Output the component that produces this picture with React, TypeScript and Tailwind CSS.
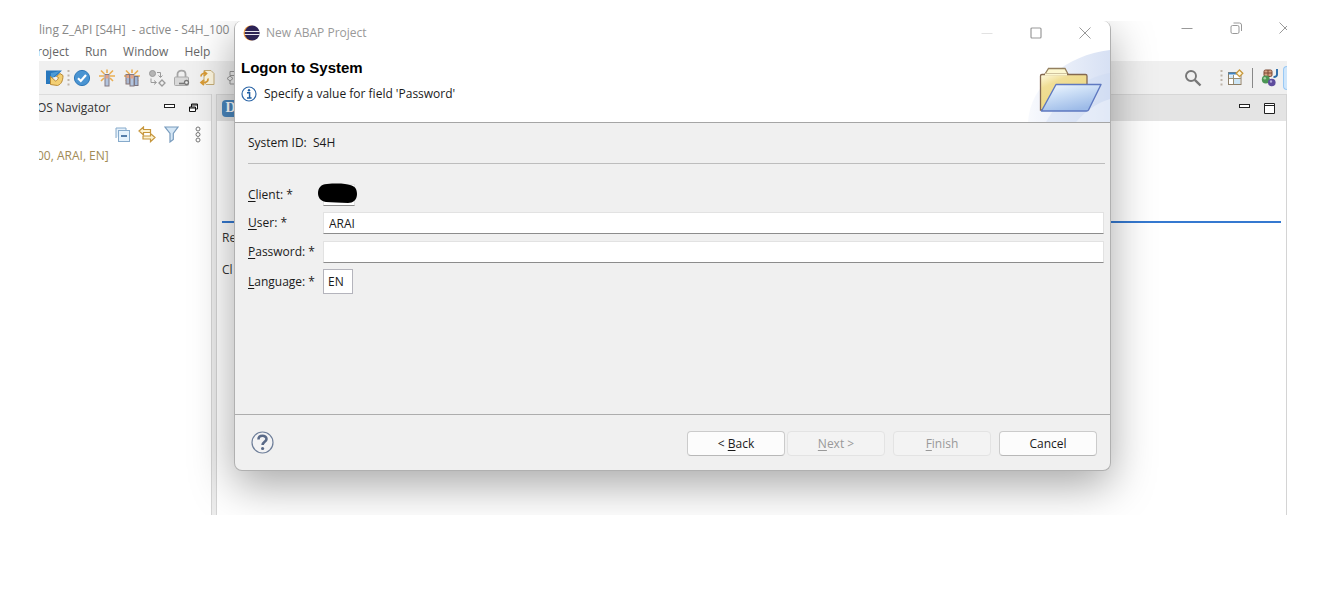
import React, { useState } from "react";
import clsx from "clsx";

type IconProps = { className?: string };

function EclipseLogo() {
  return (
    <svg width="17" height="16" viewBox="0 0 17 16" aria-hidden="true">
      <circle cx="8" cy="8" r="7.5" fill="#f19b3c" />
      <circle cx="9.2" cy="8" r="7.5" fill="#2c2255" />
      <path d="M1.8 6.500h14.900M1.8 9.500h14.900" stroke="#e9e8f1" strokeWidth="1.2" />
    </svg>
  );
}

function InfoIcon() {
  return (
    <svg width="16" height="16" viewBox="0 0 16 16" aria-hidden="true">
      <circle cx="8" cy="8" r="7" fill="#fff" stroke="#2f68a8" strokeWidth="1.2" />
      <circle cx="8" cy="4.3" r="1.2" fill="#2160a4" />
      <path d="M6 6.8h2.6v4.9M6 12h4.6" fill="none" stroke="#2160a4" strokeWidth="1.5" />
    </svg>
  );
}

function FolderBanner() {
  return (
    <svg width="84" height="73" viewBox="0 0 84 73" aria-hidden="true">
      <defs>
        <linearGradient id="glow" x1="0" y1="0" x2="1" y2="0">
          <stop offset="0" stopColor="#f6f8fd" />
          <stop offset="1" stopColor="#cdd9f1" />
        </linearGradient>
        <linearGradient id="folderBack" x1="0" y1="0" x2="0.6" y2="1">
          <stop offset="0" stopColor="#fffbe0" />
          <stop offset="0.3" stopColor="#f0de96" />
          <stop offset="1" stopColor="#ecd67b" />
        </linearGradient>
        <linearGradient id="folderFront" x1="0" y1="0" x2="0.5" y2="1">
          <stop offset="0" stopColor="#f5faff" />
          <stop offset="0.4" stopColor="#cfe1f7" />
          <stop offset="1" stopColor="#9dbbe8" />
        </linearGradient>
      </defs>
      <path d="M2 73C4 36 40 6 84 1V73Z" fill="url(#glow)" opacity="0.8" />
      <path d="M20 73C34 48 56 29 84 24V73Z" fill="#c9d6f0" opacity="0.35" />
      <path d="M50 73C60 62 70 54 84 50V73Z" fill="#fff" opacity="0.35" />
      <g transform="translate(1 0)">
        <path d="M18 25L21.500 19.500H38L41 25Z" fill="#fdf8d0" stroke="#937f5e" strokeWidth="1.3" />
        <path d="M13.500 27Q13.500 25.500 15 25.500H58.500Q60 25.500 60 27V61H13.500Z" fill="url(#folderBack)" stroke="#846850" strokeWidth="1.3" />
        <path d="M18 25.500H40" stroke="#fdf8d0" strokeWidth="2" />
        <path d="M29 35.500H74L61.500 61Q61 62 59.500 62H14.500Z" fill="url(#folderFront)" stroke="#5e78c0" strokeWidth="1.4" strokeLinejoin="round" />
      </g>
    </svg>
  );
}

function SaveAllIcon() {
  return (
    <svg width="19" height="18" viewBox="0 0 19 18" aria-hidden="true">
      <path d="M1 1.500H17L13 5.500 10 8 7 8.500 6 15H1Z" fill="#2877bd" />
      <path d="M1.500 14L6 9V4L15 2Z" fill="#4c9ad5" />
      <path d="M5.500 7.500V15.500L12.500 16.500C16 15.500 18 12 18 6.500L15 4.500 11.500 7.500 13.500 8.500C13 10.500 12 11.500 10.500 12Z" fill="#f4cf72" stroke="#b98a35" />
    </svg>
  );
}

function CheckIcon() {
  return (
    <svg width="18" height="18" viewBox="0 0 18 18" aria-hidden="true">
      <circle cx="9" cy="9" r="7.600" fill="#4a94d2" stroke="#2f78b8" />
      <path d="M5 9.300L7.800 12L13 6" fill="none" stroke="#fff" strokeWidth="2.200" />
    </svg>
  );
}

function WandIcon({ many }: { many?: boolean }) {
  return (
    <svg width="18" height="18" viewBox="0 0 18 18" aria-hidden="true">
      <path d="M9 0.500V4M3 1.500L6.500 5M15 1.500L11.500 5M1 7H6M17 7H12M3 12L6 9M15 12L12 9" stroke="#e9ae53" strokeWidth="1.600" />
      {many && (
        <>
          <rect x="3" y="5.500" width="3.500" height="9.500" fill="#a9b8d2" stroke="#8a7775" />
          <rect x="3.500" y="6" width="2.500" height="3" fill="#e5a283" />
          <rect x="11.500" y="7.500" width="3.500" height="9" fill="#9fb6d8" stroke="#7b7480" />
        </>
      )}
      <rect x="7" y="5.500" width="4" height="11.500" fill="#b3c5df" stroke="#837a82" />
      <rect x="7.500" y="6" width="3" height="3.500" fill="#e5a283" />
    </svg>
  );
}

function CycleIcon() {
  return (
    <svg width="18" height="18" viewBox="0 0 18 18" fill="none" stroke="#9a9a9a" aria-hidden="true">
      <circle cx="4.500" cy="4.500" r="3" fill="#b5b5b5" />
      <path d="M14 11L17 14 14 17 11 14Z" strokeWidth="1.300" />
      <path d="M9 3.500H12.500V8M10.500 6.500L12.500 8.500 14.500 6.500M3 9.500V13.500H8M6 11.500L8.500 13.500 6 15.500" />
    </svg>
  );
}

function LockIcon() {
  return (
    <svg width="18" height="18" viewBox="0 0 18 18" fill="none" aria-hidden="true">
      <path d="M4.500 8V5C4.500 0.500 12.500 0.500 12.500 5V8" stroke="#a5a5a5" strokeWidth="1.800" />
      <rect x="1.500" y="8" width="14" height="8.500" rx="1" fill="#d8d8d8" stroke="#a9a9a9" />
      <path d="M6 14.500H11" stroke="#777" strokeWidth="1.600" />
      <circle cx="13.500" cy="13.500" r="2" fill="#eee" stroke="#777" strokeWidth="1.300" />
    </svg>
  );
}

function ScriptIcon() {
  return (
    <svg width="18" height="18" viewBox="0 0 18 18" fill="none" aria-hidden="true">
      <path d="M6 1.500H13L16 4.500V15.500H8L6 13Z" fill="#fdf6df" stroke="#c5ad78" />
      <path d="M3 7.500C3 5 5 4 8 4.500M6 2.500L8.500 4.500 6 7M10 9.500C10.500 12.500 8 14 4 13.500M6 11L3 13.500 6 16" stroke="#d99b35" strokeWidth="1.700" />
    </svg>
  );
}

function BranchIcon() {
  return (
    <svg width="18" height="18" viewBox="0 0 18 18" fill="none" stroke="#999" aria-hidden="true">
      <path d="M7 2.500H14V6.500H7ZM4 9.500L7 7 10 9.500 7 12ZM7 12V15H14" />
    </svg>
  );
}

function SearchIcon() {
  return (
    <svg width="18" height="18" viewBox="0 0 18 18" fill="none" stroke="#777" aria-hidden="true">
      <circle cx="7" cy="7" r="5" strokeWidth="1.900" />
      <path d="M10.800 10.800L16.500 16.500" strokeWidth="2.400" />
    </svg>
  );
}

function PerspectiveIcon() {
  return (
    <svg width="17" height="17" viewBox="0 0 17 17" fill="none" aria-hidden="true">
      <rect x="1.500" y="3.500" width="12.500" height="12" fill="#fff" stroke="#8d7e66" />
      <path d="M1.500 4.500H11" stroke="#3f85c5" strokeWidth="2" />
      <path d="M2.500 6.500H6V9H2.500ZM7 10H13V15H7Z" fill="#cde6f6" />
      <path d="M2 9.500H14M6.500 6V15" stroke="#9b8f74" />
      <path d="M12.500 1L15.800 4.300 12.500 7.600 9.200 4.300Z" fill="#fff7da" stroke="#c89a3e" strokeWidth="1.300" />
    </svg>
  );
}

function AbapIcon() {
  return (
    <svg width="18" height="19" viewBox="0 0 18 19" fill="none" aria-hidden="true">
      <rect x="3" y="2" width="8" height="6.500" rx="1.500" fill="#d5a183" stroke="#7d4a35" />
      <path d="M7 2V8M3 5H11" stroke="#7d4a35" />
      <path d="M16 1V6.500C16 8.500 14.500 9 12.500 9" stroke="#2a6ba8" strokeWidth="1.900" />
      <circle cx="4.800" cy="11.500" r="4" fill="#4c9655" />
      <circle cx="3.800" cy="10.300" r="1.300" fill="#a5d3a6" />
      <circle cx="10.800" cy="14.500" r="3.800" fill="#5e4c9d" />
      <circle cx="10" cy="13.500" r="1.200" fill="#b3a9da" />
    </svg>
  );
}

function CollapseIcon() {
  return (
    <svg width="15" height="15" viewBox="0 0 15 15" fill="none" aria-hidden="true">
      <path d="M1 11V1H11V3" fill="#e5f1fb" stroke="#86aacb" />
      <rect x="3.500" y="3.500" width="11" height="11" fill="#e5f2fc" stroke="#86aacb" />
      <path d="M6 9H12" stroke="#24578f" strokeWidth="1.500" />
    </svg>
  );
}

function LinkIcon() {
  return (
    <svg width="18" height="17" viewBox="0 0 18 17" fill="#fdf2cf" stroke="#c6963c" strokeWidth="1.200" aria-hidden="true">
      <path d="M1 5L5.500 1V3.500H12.500V6.500H5.500V9Z" />
      <path d="M17 11.500L12.500 7.500V10H5V13H12.500V15.700Z" />
    </svg>
  );
}

function FilterIcon() {
  return (
    <svg width="15" height="17" viewBox="0 0 15 17" aria-hidden="true">
      <path d="M1 1H14L9.300 7.500V13.500L6 16V7.500Z" fill="#d4e6f5" stroke="#789bbd" strokeWidth="1.200" />
    </svg>
  );
}

function MenuDots() {
  return (
    <svg width="6" height="17" viewBox="0 0 6 17" fill="none" stroke="#777" aria-hidden="true">
      <circle cx="3" cy="3" r="2" />
      <circle cx="3" cy="8.500" r="2" />
      <circle cx="3" cy="14" r="2" />
    </svg>
  );
}

function HelpIcon() {
  return (
    <svg width="23" height="23" viewBox="0 0 23 23" fill="none" aria-hidden="true">
      <circle cx="11.500" cy="11.500" r="10.500" fill="#f3f3f4" stroke="#6f7f9a" strokeWidth="1.200" />
      <path d="M7.500 8.500C7.500 3.500 15.500 3.800 15.500 8C15.500 10.800 11.600 10.800 11.600 14" stroke="#5a6a88" strokeWidth="2.600" />
      <circle cx="11.600" cy="17.500" r="1.600" fill="#5a6a88" />
    </svg>
  );
}

function MinimizeView() {
  return (
    <svg width="11" height="10" viewBox="0 0 11 10" aria-hidden="true">
      <rect x="0.500" y="1.500" width="10" height="3" fill="#fff" stroke="#222" />
    </svg>
  );
}

function RestoreView() {
  return (
    <svg width="9" height="10" viewBox="0 0 9 10" fill="#fff" stroke="#111" aria-hidden="true">
      <path d="M2.500 1H8.500V6H2.500ZM2.500 2H8.500" />
      <path d="M0.500 4H6.500V8.500H0.500ZM0.500 5H6.500" />
    </svg>
  );
}

function MaximizeView() {
  return (
    <svg width="11" height="11" viewBox="0 0 11 11" fill="#fff" stroke="#222" aria-hidden="true">
      <path d="M0.500 0.500H10.500V10.500H0.500ZM0.500 2.500H10.500" />
    </svg>
  );
}

function WindowGlyph({ kind, className }: IconProps & { kind: "min" | "max" | "restore" | "close" }) {
  return (
    <svg width="12" height="12" viewBox="0 0 12 12" fill="none" stroke="currentColor" className={className} aria-hidden="true">
      {kind === "min" && <path d="M0.500 6.500H11.500" />}
      {kind === "max" && <rect x="1" y="1" width="10" height="10" rx="1" strokeWidth="1.200" />}
      {kind === "restore" && (
        <>
          <rect x="1" y="3.500" width="8" height="8" rx="1.500" />
          <path d="M3.500 1H9.500Q11.500 1 11.500 3V9" />
        </>
      )}
      {kind === "close" && <path d="M0.500 0.500L11.500 11.500M11.500 0.500L0.500 11.500" />}
    </svg>
  );
}

function Grip() {
  return (
    <svg width="3" height="16" viewBox="0 0 3 16" aria-hidden="true">
      <path d="M1.500 0V16" stroke="#bdb3a8" strokeWidth="2" strokeDasharray="2 2.500" />
    </svg>
  );
}

const TOOLS = [
  { label: "Validate", icon: <CheckIcon /> },
  { label: "Activate", icon: <WandIcon /> },
  { label: "Activate all", icon: <WandIcon many /> },
  { label: "Toggle version", icon: <CycleIcon /> },
  { label: "Lock", icon: <LockIcon /> },
  { label: "Refresh", icon: <ScriptIcon /> },
  { label: "Where used", icon: <BranchIcon /> },
];

function Workbench() {
  return (
    <div className="flex min-h-[494px] flex-col text-[#333]">
      <div className="flex h-[18px] items-center justify-between text-[#888]">
        <span className="whitespace-nowrap">{"ling Z_API [S4H]\u00a0 - active - S4H_100"}</span>
        <div className="-mr-1 flex gap-[37px] pb-1 text-[#999]">
          <button type="button" aria-label="Minimize"><WindowGlyph kind="min" /></button>
          <button type="button" aria-label="Restore"><WindowGlyph kind="restore" /></button>
          <button type="button" aria-label="Close"><WindowGlyph kind="close" /></button>
        </div>
      </div>
      <nav className="-ml-0.5 flex h-[22px] items-center gap-4 pt-1 text-[#666]">
        {["roject", "Run", "Window", "Help"].map((item) => (
          <button type="button" key={item}>{item}</button>
        ))}
      </nav>
      <div className="flex h-[33px] items-center justify-between bg-[#f0f0f0] pl-1.5">
        <div className="flex items-center gap-[7px]">
          <button type="button" aria-label="Open"><SaveAllIcon /></button>
          <span className="-mx-1"><Grip /></span>
          {TOOLS.map((tool) => (
            <button type="button" key={tool.label} aria-label={tool.label}>{tool.icon}</button>
          ))}
        </div>
        <div className="flex items-center">
          <button type="button" aria-label="Search" className="mr-[18px]"><SearchIcon /></button>
          <Grip />
          <button type="button" aria-label="Open perspective" className="mx-1"><PerspectiveIcon /></button>
          <span className="mx-1 h-5 w-px bg-[#888]" />
          <button type="button" aria-label="ABAP" className="mx-1"><AbapIcon /></button>
          <span className="h-6 w-1 rounded-l-sm border border-r-0 border-[#99c9f5] bg-[#cfe6fb]" />
        </div>
      </div>
      <div className="flex grow bg-[#ececec]">
        <aside className="flex w-[173px] flex-col border-r border-[#d4d4d4] bg-white">
          <div className="flex h-[27px] items-center justify-between border-t border-[#dcdcdc] bg-[#f0f0f0] pr-[13px]">
            <span className="-ml-0.5 whitespace-nowrap">OS Navigator</span>
            <div className="flex items-center gap-3.5">
              <button type="button" aria-label="Minimize view"><MinimizeView /></button>
              <button type="button" aria-label="Restore view"><RestoreView /></button>
            </div>
          </div>
          <div className="flex h-[26px] items-center justify-end gap-2 pr-2.5">
            <button type="button" aria-label="Collapse all"><CollapseIcon /></button>
            <button type="button" aria-label="Link with editor"><LinkIcon /></button>
            <button type="button" aria-label="Filter"><FilterIcon /></button>
            <button type="button" aria-label="View menu" className="ml-2"><MenuDots /></button>
          </div>
          <span className="-ml-0.5 whitespace-nowrap text-[#a18a55]">00, ARAI, EN]</span>
        </aside>
        <main className="ml-1 grow border-x border-[#d4d4d4] bg-white">
          <div className="flex h-[27px] items-center justify-between border-t border-[#d6d6d6] bg-[#e4e4e4] pr-[11px] pl-[5px]">
            <span className="flex size-[17px] items-center justify-center rounded bg-[#4a86bd] font-['Liberation_Serif',serif] text-sm font-bold text-white">D</span>
            <div className="flex items-center gap-3.5">
              <button type="button" aria-label="Minimize editor"><MinimizeView /></button>
              <button type="button" aria-label="Maximize editor"><MaximizeView /></button>
            </div>
          </div>
          <div className="mr-[5px] ml-[5px] border-b-2 border-[#3579d0] pt-[100px]" />
          <p className="pt-1.5 pl-[5px]">Re</p>
          <p className="pt-3.5 pl-[5px]">Cl</p>
        </main>
      </div>
    </div>
  );
}

function FieldLabel({ htmlFor, text }: { htmlFor: string; text: string }) {
  return (
    <label htmlFor={htmlFor} className="w-[75px] shrink-0 whitespace-nowrap">
      <span className="underline underline-offset-2">{text[0]}</span>
      {text.slice(1)}: *
    </label>
  );
}

const inputStyle = "border border-[#e2e2e2] border-b-[#8c8c8c] bg-white px-[5px] outline-none";

function LogonDialog() {
  const [user, setUser] = useState("ARAI");
  const [password, setPassword] = useState("");
  const [language, setLanguage] = useState("EN");

  return (
    <div
      role="dialog"
      aria-labelledby="dialog-title"
      className="absolute top-0 right-[176px] left-[195px] flex flex-col overflow-hidden rounded-lg border border-t-0 border-[#b0b0b0] bg-[#f0f0f0] text-[#1a1a1a] shadow-[0_14px_44px_rgba(0,0,0,0.35)]"
    >
      <div className="flex h-6 items-center justify-between bg-white pr-[19px] pl-2 text-[#999]">
        <div className="flex items-center gap-1.5">
          <EclipseLogo />
          <span id="dialog-title">New ABAP Project</span>
        </div>
        <div className="flex items-center gap-[37px]">
          <button type="button" aria-label="Minimize" className="text-[#e2e2e2]"><WindowGlyph kind="min" /></button>
          <button type="button" aria-label="Maximize"><WindowGlyph kind="max" /></button>
          <button type="button" aria-label="Close"><WindowGlyph kind="close" /></button>
        </div>
      </div>
      <div className="flex items-end justify-between border-b border-[#a5a5a5] bg-white pt-1">
        <div className="pb-[18px] pl-1.5">
          <h1 className="font-['Liberation_Sans',Arial,sans-serif] text-[15px] leading-5 font-bold text-black">
            Logon to System
          </h1>
          <p className="mt-1.5 flex h-5 items-center gap-[7px]">
            <InfoIcon />
            Specify a value for field 'Password'
          </p>
        </div>
        <FolderBanner />
      </div>
      <div className="mr-[5px] ml-[13px] flex h-[41px] items-center border-b border-[#bdbdbd]">
        {"System ID:\u00a0 S4H"}
      </div>
      <form className="flex flex-col pt-[17px] pr-1.5 pb-[117px] pl-[13px]">
        <div className="flex h-7 items-center">
          <FieldLabel htmlFor="client" text="Client" />
          <div className="relative">
            <input id="client" className={clsx(inputStyle, "h-[22px] w-8")} />
            <svg width="41" height="22" viewBox="0 0 41 22" className="absolute -top-px -left-1.5" aria-hidden="true">
              <path d="M10 1C22 0 30 1 33 2C38 3 40 6 40 11C40 17 36 20 31 20C23 20 15 19 9 19C3 18 1 14 1 10C1 5 4 1 10 1Z" />
            </svg>
          </div>
        </div>
        <div className="flex h-7 items-center">
          <FieldLabel htmlFor="user" text="User" />
          <input id="user" value={user} onChange={(e) => setUser(e.target.value)} className={clsx(inputStyle, "h-[22px] min-w-0 grow")} />
        </div>
        <div className="flex h-[29px] items-center">
          <FieldLabel htmlFor="password" text="Password" />
          <input id="password" type="password" value={password} onChange={(e) => setPassword(e.target.value)} className={clsx(inputStyle, "h-[22px] min-w-0 grow")} />
        </div>
        <div className="flex h-[31px] items-center">
          <FieldLabel htmlFor="language" text="Language" />
          <input id="language" value={language} onChange={(e) => setLanguage(e.target.value)} className="h-[25px] w-[30px] border border-[#b4b4bc] bg-white px-1 outline-none" />
        </div>
      </form>
      <div className="flex items-start justify-between border-t border-[#adadad] pt-4 pr-[13px] pb-3.5 pl-4">
        <button type="button" aria-label="Help"><HelpIcon /></button>
        <div className="flex">
          <DialogButton before="< " mnemonic="B" after="ack" />
          <DialogButton mnemonic="N" after="ext >" disabled className="ml-0.5" />
          <DialogButton mnemonic="F" after="inish" disabled className="ml-2" />
          <DialogButton after="Cancel" className="ml-2" />
        </div>
      </div>
    </div>
  );
}

type DialogButtonProps = {
  before?: string;
  mnemonic?: string;
  after: string;
  disabled?: boolean;
  className?: string;
};

function DialogButton({ before, mnemonic, after, disabled, className }: DialogButtonProps) {
  return (
    <button
      type="button"
      disabled={disabled}
      className={clsx(
        "h-[25px] w-[98px] rounded border",
        disabled
          ? "border-[#e3e3e3] bg-[#f3f3f3] text-[#999]"
          : "border-[#cbcbcb] border-b-[#b8b8b8] bg-[#fcfcfc]",
        className,
      )}
    >
      {before}
      {mnemonic && <span className="underline underline-offset-2">{mnemonic}</span>}
      {after}
    </button>
  );
}

export default function App() {
  return (
    <div className="min-h-screen bg-white pt-[21px] pr-[47px] pl-[39px] font-['Open_Sans','Noto_Sans',sans-serif] text-[12px] leading-[18px]">
      <div className="relative overflow-hidden">
        <Workbench />
        <LogonDialog />
      </div>
    </div>
  );
}
